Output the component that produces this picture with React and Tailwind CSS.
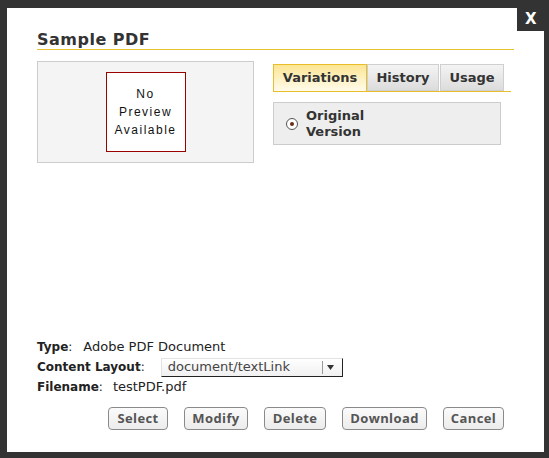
const tabs = [
  { label: "Variations", w: "w-[94px]", active: true },
  { label: "History", w: "w-[72px]" },
  { label: "Usage", w: "w-[64px] ml-[1px]" },
];

const buttons = [
  { label: "Select", w: "w-[60px]" },
  { label: "Modify", w: "w-[64px]" },
  { label: "Delete", w: "w-[62px]" },
  { label: "Download", w: "w-[85px]" },
  { label: "Cancel", w: "w-[61px]" },
];

const Tab = ({ label, w, active }) => (
  <div
    className={
      active
        ? `${w} h-[27px] flex items-center justify-center border border-b-0 border-[#e8bf2a] bg-gradient-to-b from-[#fde592] to-[#fffbea] text-[13px] font-bold text-[#333]`
        : `${w} h-[27px] flex items-center justify-center border border-[#cfcfcf] bg-gradient-to-b from-[#f4f4f4] to-[#dcdcdc] text-[13px] font-bold text-[#333]`
    }
  >
    {label}
  </div>
);

const InfoRow = ({ label, children, gap = "ml-[4px]" }) => (
  <div className="h-[20px] flex items-center text-[12px] text-[#222]">
    <span className="font-bold">{label}</span>
    <span>:</span>
    <div className={`${gap} text-[13px]`}>{children}</div>
  </div>
);

export default function App() {
  return (
    <div
      className="w-[549px] h-[458px] bg-[#333] pt-[8px] pl-[7px]"
      style={{ fontFamily: '"DejaVu Sans", Verdana, sans-serif' }}
    >
      <div className="relative w-[537px] h-[444px] bg-white flex flex-col px-[30px] pt-[22px] pb-[22px]">
        {/* close box */}
        <div className="absolute top-0 right-[-5px] w-[32px] h-[23px] bg-[#333] flex items-center pl-[8px] text-white text-[15px] font-bold leading-none">
          X
        </div>

        <h1 className="text-[16px] leading-[19px] font-bold text-[#333] tracking-[0.5px] border-b border-[#e6be2e]">
          Sample PDF
        </h1>

        <div className="flex mt-[11px]">
          <div className="w-[217px] h-[102px] border border-[#cccccc] bg-[#f4f4f4] flex items-center justify-center">
            <div
              className="w-[80px] h-[80px] border border-[#990000] bg-white flex items-center justify-center text-center text-[12px] leading-[18px] tracking-[1.5px] text-[#111]"
              style={{ fontFamily: '"Liberation Sans", Arial, sans-serif' }}
            >
              No
              <br />
              Preview
              <br />
              Available
            </div>
          </div>

          <div className="ml-[19px] pt-[3px] w-[238px]">
            <div className="flex border-b border-[#e8bf2a]">
              {tabs.map((t) => (
                <Tab key={t.label} {...t} />
              ))}
            </div>
            <div className="mt-[10px] w-[228px] h-[43px] border border-[#cccccc] bg-[#eeeeee] flex items-center pl-[12px]">
              <div className="w-[12px] h-[12px] rounded-full border border-[#555] bg-white flex items-center justify-center">
                <div className="w-[4px] h-[4px] rounded-full bg-[#6b2d17]" />
              </div>
              <div className="ml-[8px] text-[13px] leading-[16px] font-bold text-[#333]">
                Original
                <br />
                Version
              </div>
            </div>
          </div>
        </div>

        <div className="mt-auto">
          <InfoRow label="Type" gap="ml-[11px]">
            Adobe PDF Document
          </InfoRow>
          <InfoRow label="Content Layout" gap="ml-[16px]">
            <div className="w-[182px] h-[19px] flex items-center border-l border-t border-[#e2e2e2] border-r border-b border-r-[#222] border-b-[#222] bg-gradient-to-b from-white to-[#f0f0f0]">
              <span className="pl-[6px] flex-1 text-[#444]">document/textLink</span>
              <div className="w-[1px] h-[13px] bg-[#999]" />
              <svg className="mx-[4px]" width="7" height="5" viewBox="0 0 7 5">
                <path d="M0 0h7L3.5 5z" fill="#333" />
              </svg>
              <div className="w-[4px]" />
            </div>
          </InfoRow>
          <InfoRow label="Filename" gap="ml-[10px]">
            testPDF.pdf
          </InfoRow>

          <div
            className="flex justify-end gap-[16px] pr-[10px] mt-[10px]"
            style={{ fontFamily: '"Open Sans", sans-serif' }}
          >
            {buttons.map((b) => (
              <button
                key={b.label}
                className={`${b.w} h-[23px] rounded-[4px] border border-[#8a8a8a] bg-gradient-to-b from-[#fbfbfb] to-[#ececec] text-[13px] font-bold tracking-[0.4px] text-[#555] flex items-center justify-center`}
              >
                {b.label}
              </button>
            ))}
          </div>
        </div>
      </div>
    </div>
  );
}
